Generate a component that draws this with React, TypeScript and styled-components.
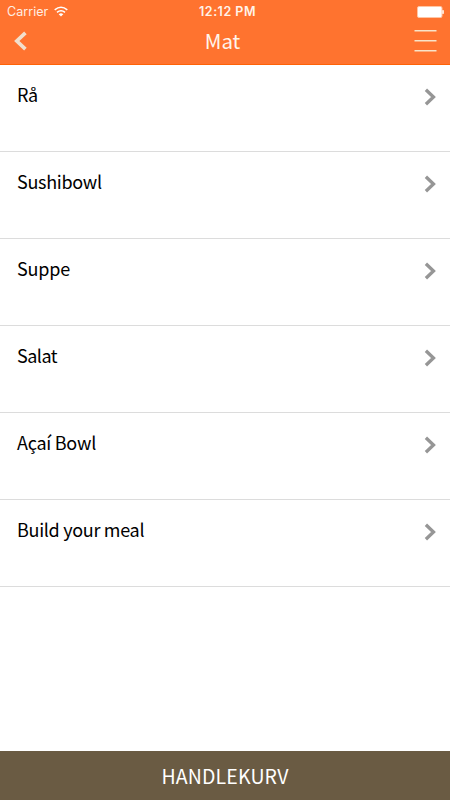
import React from "react";
import styled, { createGlobalStyle } from "styled-components";

const GlobalStyle = createGlobalStyle`
  * { box-sizing: border-box; }
  body { margin: 0; background: #fff; }
`;

const humanist = `"Noto Sans CJK SC", "Noto Sans", sans-serif`;

const Screen = styled.div`
  display: flex;
  flex-direction: column;
  width: 450px;
  height: 800px;
  overflow: hidden;
  background: #fff;
  color: #000;
  font-family: ${humanist};
`;

const Header = styled.header`
  height: 65px;
  flex: none;
  background: #ff732f;
  border-bottom: 1px solid #ff6207;
  color: #fff;
`;

const StatusBar = styled.div`
  display: grid;
  grid-template-columns: 1fr auto 1fr;
  align-items: center;
  height: 22px;
  padding: 1px 6px 0 7px;
  font: 12.5px/20px Inter, sans-serif;
`;

const Carrier = styled.div`
  display: flex;
  align-items: center;
  gap: 6px;
  color: #ffeee2;
  letter-spacing: 0.05px;
`;

const Clock = styled.div`
  padding-left: 4px;
  font-weight: 600;
  font-size: 12.5px;
  letter-spacing: 0.5px;
  color: #fff3e9;
`;

const Battery = styled.svg`
  justify-self: end;
`;

const NavBar = styled.nav`
  display: grid;
  grid-template-columns: 60px 1fr 60px;
  align-items: center;
  height: 38px;
  padding: 0 13px 0 14px;
`;

const NavButton = styled.button<{ $end?: boolean }>`
  display: flex;
  justify-content: ${(p) => (p.$end ? "flex-end" : "flex-start")};
  padding: 0;
  border: 0;
  background: none;
`;

const Title = styled.h1`
  margin: 0;
  padding: 0 6px 2px 0;
  font-size: 20.5px;
  font-weight: 400;
  line-height: 36px;
  text-align: center;
  letter-spacing: -0.1px;
  color: #fff5ec;
`;

const Menu = styled.main`
  flex: 1;
`;

const Row = styled.div`
  display: flex;
  justify-content: space-between;
  align-items: flex-start;
  height: 87px;
  padding: 15px 14px 0 17px;
  border-bottom: 1px solid #dcdcdc;
`;

const Label = styled.span<{ $tracking: number }>`
  font-size: 18px;
  line-height: 28px;
  letter-spacing: ${(p) => p.$tracking}px;
`;

const RowArrow = styled.svg`
  margin-top: 8px;
`;

const CartBar = styled.footer`
  height: 49px;
  flex: none;
  background: #6a5b43;
  color: #fff;
  font-size: 19.5px;
  line-height: 50px;
  letter-spacing: 0.15px;
  text-align: center;
`;

const items = [
  { name: "Rå", tracking: -0.3 },
  { name: "Sushibowl", tracking: -0.3 },
  { name: "Suppe", tracking: -0.2 },
  { name: "Salat", tracking: -0.5 },
  { name: "Açaí Bowl", tracking: -0.25 },
  { name: "Build your meal", tracking: -0.3 },
];

export default function App() {
  return (
    <Screen>
      <GlobalStyle />
      <Header>
        <StatusBar>
          <Carrier>
            <span>Carrier</span>
            <svg width="14" height="11" viewBox="0 0 14 11" fill="none" stroke="#fff" strokeWidth="1.6">
              <path d="M.7 3.8Q7-1.3 13.3 3.8M3 6.3Q7 3.1 11 6.3" />
              <path d="M7 10.5 4.7 8.2Q7 6.5 9.3 8.2Z" fill="#fff" stroke="none" />
            </svg>
          </Carrier>
          <Clock>12:12 PM</Clock>
          <Battery width="27" height="12" viewBox="0 0 27 12">
            <rect x=".5" y=".5" width="24.5" height="11" rx="1.5" fill="#fff" stroke="#ffc5a4" />
            <rect x="25" y="4" width="2" height="4" rx=".8" fill="#ffe2d0" />
          </Battery>
        </StatusBar>
        <NavBar>
          <NavButton aria-label="Back">
            <svg width="14" height="20" viewBox="0 0 14 20" fill="none" stroke="#f2dfcc" strokeWidth="3.7">
              <path d="M11.4 1.8 2.8 10l8.6 8.2" />
            </svg>
          </NavButton>
          <Title>Mat</Title>
          <NavButton $end aria-label="Menu">
            <svg width="23" height="22" viewBox="0 0 23 22" fill="#f8e3c8">
              <path d="M.5 0h22v1.5H.5zM.5 10h22v1.5H.5zM.5 20h22v1.5H.5z" />
            </svg>
          </NavButton>
        </NavBar>
      </Header>
      <Menu>
        {items.map((item) => (
          <Row key={item.name}>
            <Label $tracking={item.tracking}>{item.name}</Label>
            <RowArrow width="12" height="18" viewBox="0 0 12 18" fill="none" stroke="#969696" strokeWidth="3.3">
              <path d="m1.9 1.7 7.6 7.3-7.6 7.3" />
            </RowArrow>
          </Row>
        ))}
      </Menu>
      <CartBar>HANDLEKURV</CartBar>
    </Screen>
  );
}
